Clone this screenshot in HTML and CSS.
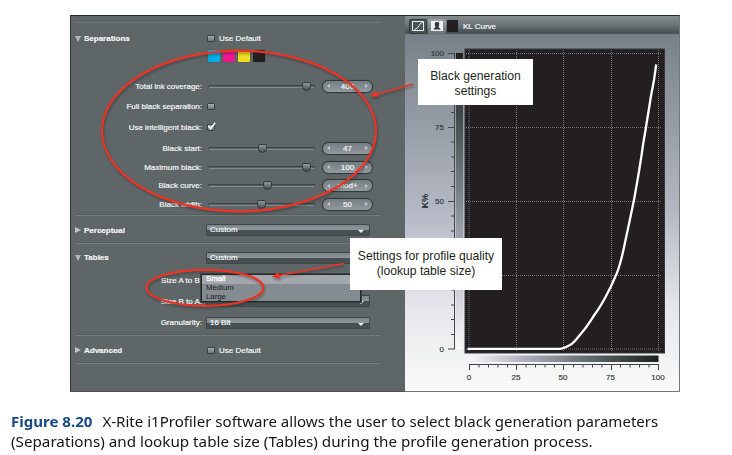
FILE: index.html
```html
<!DOCTYPE html>
<html lang="en">
<head>
<meta charset="utf-8">
<title>Figure 8.20</title>
<link rel="stylesheet" href="styles.css">
</head>
<body>
<figure class="figure">
  <div class="app">
    <div class="settings">
      <div class="strip"></div>
      <section class="group separations">
        <div class="row head"><h2><i class="tri down"></i>Separations</h2><div class="control"><i class="check"></i>Use Default</div></div>
        <div class="swatches"><i class="cyan"></i><i class="magenta"></i><i class="yellow"></i><i class="black"></i></div>
        <div class="row r20"><label>Total ink coverage:</label><div class="control"><div class="slider"><i class="knob" style="left:93%"></i></div><div class="stepper"><i class="prev"></i>400<i class="next"></i></div></div></div>
        <div class="row r21"><label>Full black separation:</label><div class="control"><i class="check"></i></div></div>
        <div class="row r21"><label>Use intelligent black:</label><div class="control"><i class="check"><svg viewBox="0 0 10 10"><path d="M1.5 4.5 4 7.5 9 .8"/></svg></i></div></div>
        <div class="row r20"><label>Black start:</label><div class="control"><div class="slider"><i class="knob" style="left:51%"></i></div><div class="stepper"><i class="prev"></i>47<i class="next"></i></div></div></div>
        <div class="row r18"><label>Maximum black:</label><div class="control"><div class="slider"><i class="knob" style="left:93%"></i></div><div class="stepper"><i class="prev"></i>100<i class="next"></i></div></div></div>
        <div class="row r18"><label>Black curve:</label><div class="control"><div class="slider"><i class="knob" style="left:56%"></i></div><div class="stepper"><i class="prev"></i>mod+<i class="next"></i></div></div></div>
        <div class="row r18"><label>Black width:</label><div class="control"><div class="slider"><i class="knob" style="left:50%"></i></div><div class="stepper"><i class="prev"></i>50<i class="next"></i></div></div></div>
      </section>
      <section class="group single">
        <div class="row"><h2><i class="tri"></i>Perceptual</h2><div class="control"><div class="select">Custom</div></div></div>
      </section>
      <section class="group tables">
        <div class="row r28"><h2><i class="tri down"></i>Tables</h2><div class="control"><div class="select">Custom</div></div></div>
        <div class="row r18"><label>Size A to B:</label><div class="control anchor"><div class="select"></div>
          <ul class="menu"><li class="active">Small</li><li>Medium</li><li>Large</li></ul></div></div>
        <div class="row r22"><label>Size B to A:</label><div class="control"><div class="select">Medium</div></div></div>
        <div class="row r20"><label>Granularity:</label><div class="control"><div class="select">16 Bit</div></div></div>
      </section>
      <section class="group single">
        <div class="row"><h2><i class="tri"></i>Advanced</h2><div class="control"><i class="check"></i>Use Default</div></div>
      </section>
    </div>
    <div class="viewer">
      <header class="toolbar">
        <span class="tool pressed"><svg viewBox="0 0 14 12"><path d="M1.5 1.5h11v9h-11zM3.5 9.500C8 9 8 3 12 2"/></svg></span>
        <span class="tool"><svg viewBox="0 0 14 12"><path class="card" d="M1 1h12v10H1z"/><path class="person" d="M3.500 9.500c0-1.500 2-1.500 2-2.500C4 3 5 2 7 2s3 1 1.500 5c0 1 2 1 2 2.500z"/></svg></span>
        <i class="chip"></i><span>KL Curve</span>
      </header>
      <svg class="chart" viewBox="405 35 275 356">
        <defs>
          <linearGradient id="gv" x1="0" y1="0" x2="0" y2="1"><stop offset="0" stop-color="#231f20"/><stop offset=".25" stop-color="#465253"/><stop offset=".5" stop-color="#7f8890"/><stop offset=".75" stop-color="#c0c3ce"/><stop offset="1" stop-color="#fafafb"/></linearGradient>
          <linearGradient id="gh"><stop offset="0" stop-color="#f7f6fa"/><stop offset=".25" stop-color="#b7b9c5"/><stop offset=".5" stop-color="#7e878c"/><stop offset=".75" stop-color="#485453"/><stop offset="1" stop-color="#1c201f"/></linearGradient>
        </defs>
        <rect x="456" y="53" width="7" height="296" fill="url(#gv)"/>
        <rect x="469" y="355.500" width="189.500" height="6.500" fill="url(#gh)"/>
        <rect class="plot" x="465" y="49" width="199.500" height="304"/>
        <path class="grid" d="M469 50v302M516.500 50v302M563.500 50v302M611.500 50v302M658.500 50v302M466 53.500h196M466 127.500h196M466 201.500h196M466 275.500h196M466 349h196"/>
        <path class="axis" d="M454.500 53v296M448 53.500h7M448 127.500h7M448 201.500h7M448 275.500h7M448 349h7M451 68h4M451 83h4M451 97.500h4M451 112.500h4M451 142h4M451 157h4M451 171.500h4M451 186.500h4M451 216h4M451 231h4M451 245.500h4M451 260.500h4M451 290h4M451 305h4M451 319.500h4M451 334.500h4"/>
        <path class="axis" d="M469 364.500h190M469.500 364v6M516.500 364v6M563.500 364v6M611.500 364v6M658.500 364v6M479 364v3.500M488.500 364v3.500M498 364v3.500M507.500 364v3.500M526 364v3.500M535.500 364v3.500M545 364v3.500M554.500 364v3.500M573.500 364v3.500M583 364v3.500M592.500 364v3.500M602 364v3.500M620.500 364v3.500M630 364v3.500M639.500 364v3.500M649 364v3.500"/>
        <path class="curve" d="M467.500 348.800H560C564 348.500 567 346.800 571.700 344C575 341.500 578 337 581.700 332.800C587 327 591 320 595 314C602 305 607 294 610.700 287L616.500 274C622 261 624 246 627.500 231L634 200C638 178 641 160 643 145L646 127L651 96L654 80L656.200 64.500"/>
        <g class="nums end"><text x="444" y="56">100</text><text x="444" y="130.300">75</text><text x="444" y="204.300">50</text><text x="444" y="352">0</text></g>
        <g class="nums mid"><text x="469" y="380">0</text><text x="516" y="380">25</text><text x="563" y="380">50</text><text x="610.500" y="380">75</text><text x="658" y="380">100</text></g>
        <text class="ktitle" transform="translate(427.500 201) rotate(-90)">K%</text>
      </svg>
    </div>
    <svg class="marks" viewBox="70 15 610 376">
      <ellipse cx="239" cy="131" rx="137" ry="80.300"/>
      <ellipse cx="205" cy="287.800" rx="58.300" ry="18"/>
      <path d="M413 84 376 94.500M344 263.500 279 275.500"/>
      <path class="tip" d="M370 96l6.500-5.200 1.700 6.300zM271.500 276.800l7.300-4.600 1.300 6.500z"/>
    </svg>
    <div class="note note-black">Black generation<br>settings</div>
    <div class="note note-size">Settings for profile quality<br>(lookup table size)</div>
  </div>
  <figcaption><span class="l1"><b>Figure 8.20</b>X-Rite i1Profiler software allows the user to select black generation parameters</span><span class="l2">(Separations) and lookup table size (Tables) during the profile generation process.</span></figcaption>
</figure>
</body>
</html>
```
FILE: styles.css
```css
* { box-sizing: border-box; }
body { margin: 0; background: #fff; font-family: "Liberation Sans", sans-serif; overflow: hidden; }
.figure { margin: 0; padding-top: 15px; }
.app { position: relative; display: grid; grid-template-columns: 335px 275px; width: 610px; height: 376px; margin-left: 70px; background: #5e6668; }
.settings { padding-right: 25px; border-left: 1px solid #303638; border-top: 1px solid #252b2c; border-bottom: 1px solid #564e57; color: #f4f5f5; font-size: 8px; -webkit-text-stroke: .2px #f4f5f5; }
.strip { height: 7px; margin-left: 4px; border-bottom: 1px solid #6e7779; }
.group { margin-left: 4px; border-bottom: 1px solid #737b7d; box-shadow: 0 -1px 0 #555d5f inset; }
.separations { height: 193px; }
.single { height: 28px; }
.tables { height: 92px; }
.row { display: grid; grid-template-columns: 127px 1fr; column-gap: 4px; align-items: center; height: 28px; }
.head { padding-top: 4px; height: 27px; }
.r20 { height: 20px; }
.r21 { height: 21px; }
.r18 { height: 18.500px; }
.r22 { height: 23px; }
.r28 { height: 27px; }
.row label { text-align: right; white-space: nowrap; }
h2 { display: flex; align-items: center; gap: 3px; margin: 0; font-size: 8px; font-weight: bold; }
.tri { width: 0; height: 0; border: 3px solid transparent; border-left: 6px solid #c3c7ca; border-right: 0; }
.tri.down { border: 3.500px solid transparent; border-top: 6px solid #b2b8bb; border-bottom: 0; }
.control { display: flex; align-items: center; }
.check { display: flex; width: 8px; height: 7px; margin: 0 4px 0 1px; border: 1px solid #394042; border-radius: 1px; background: linear-gradient(#aab0b4, #6c7477); }
.check svg { width: 9px; height: 9px; margin: -3px 0 0 -1px; flex: none; overflow: visible; fill: none; stroke: #fff; stroke-width: 1.600; }
.swatches { display: flex; gap: 3px; height: 26px; padding-left: 133px; }
.swatches i { width: 12px; height: 12px; border-radius: 1px; box-shadow: 0 0 1px #313739; }
.cyan { background: #00ade8; }
.magenta { background: #ed1691; }
.yellow { background: #f0dc22; }
.black { background: #231f20; }
.slider { position: relative; width: 107px; height: 3px; margin: 0 7px 0 2px; border: 1px solid #3d4446; border-bottom-color: #81898c; border-radius: 2px; background: #596164; }
.knob { position: absolute; top: -4px; width: 9px; height: 9px; margin-left: -5px; border: 1px solid #30373a; border-radius: 2px 2px 5px 5px; background: linear-gradient(#929a9d, #454d50); }
.stepper { display: flex; align-items: center; justify-content: space-between; width: 51px; height: 13px; padding: 0 4px; border: 1px solid #33393b; border-radius: 7px; background: linear-gradient(#747d80, #929aa0); box-shadow: 0 0 1px #2b3133; }
.prev, .next { width: 0; height: 0; border: 2px solid transparent; }
.prev { border-right: 3px solid #c3cbcf; border-left: 0; }
.next { border-left: 3px solid #c3cbcf; border-right: 0; }
.select { position: relative; width: 164px; height: 12px; padding-left: 3px; line-height: 10px; border: 1px solid #404749; border-radius: 1px; background: linear-gradient(#7d858a, #8d959a 46%, #465052 50%, #465052); }
.select::after { content: ""; position: absolute; right: 5px; top: 5px; border: 3px solid transparent; border-top-color: #e9ecec; border-bottom: 0; }
.anchor { position: relative; }
.menu { position: absolute; z-index: 1; left: -5px; top: 0; width: 160px; height: 28px; margin: 0; padding: 0; list-style: none; border: 1px solid #24282a; outline: 1px solid #3e4446; background: #858c91; color: #191d1f; -webkit-text-stroke: 0; font-size: 7.800px; line-height: 8.700px; }
.menu li { padding-left: 4px; }
.menu .active { background: #a3a8ae; color: #fff; -webkit-text-stroke: .3px #fff; }
.viewer { display: flex; flex-direction: column; border-top: 1px solid #252b2c; border-right: 1px solid #73777a; border-bottom: 1px solid #73777a; background: linear-gradient(#778087 18px, #b4b8c4 52%, #e6e7eb 78%, #fafafa); }
.toolbar { display: flex; align-items: center; gap: 1px; height: 19px; padding: 1px 0 0 4px; background: linear-gradient(#858d91, #6c7578 45%, #434d4f 90%, #838b8e); color: #f4f5f5; font-size: 8px; -webkit-text-stroke: .2px #f4f5f5; }
.tool { display: flex; align-items: center; justify-content: center; width: 18px; height: 15px; border-radius: 2px; background: linear-gradient(#9ca3a6, #697275); }
.tool svg { width: 14px; height: 12px; flex: none; fill: none; stroke: #edf0f0; stroke-width: 1; }
.pressed { background: #4b5355; border: 1px solid #31393b; }
.tool .card { fill: #eef0f0; stroke: none; }
.tool .person { fill: #30393b; stroke: none; }
.chip { width: 11px; height: 12px; margin-right: 4px; border-radius: 1px; background: #231f20; }
.chart { display: block; width: 275px; height: 356px; flex: none; }
.plot { fill: #231f20; stroke: #353638; stroke-width: 1; }
.grid { fill: none; stroke: #74777a; stroke-width: 1; stroke-dasharray: 1 1; }
.axis { fill: none; stroke: #414648; stroke-width: 1; }
.curve { fill: none; stroke: #fff; stroke-width: 2.300; }
.nums { font-size: 8px; fill: #303638; stroke: #303638; stroke-width: .15; }
.end { text-anchor: end; }
.mid, .ktitle { text-anchor: middle; }
.ktitle { font-size: 9px; font-weight: bold; fill: #24292b; }
.marks { position: absolute; z-index: 2; inset: 0; width: 610px; height: 376px; fill: none; stroke: #f03222; stroke-width: 2.200; filter: drop-shadow(1px 2px 1px rgba(35, 35, 35, .4)); }
.marks path { stroke-width: 1.500; }
.marks .tip { fill: #f03222; stroke: none; }
.note { position: absolute; z-index: 3; background: #fff; color: #231f20; text-align: center; font-size: 12.150px; line-height: 15px; white-space: nowrap; }
.note-black { left: 348px; top: 44px; width: 115px; height: 46px; padding-top: 10px; }
.note-size { left: 280px; top: 223px; width: 152px; height: 52px; padding-top: 11px; }
figcaption { display: flex; flex-direction: column; align-items: flex-start; padding: 20px 0 0 11px; font-family: "Noto Sans", sans-serif; font-size: 15px; line-height: 20px; color: #171415; white-space: nowrap; }
figcaption span { transform-origin: left; }
.l1 { transform: scaleX(1.003); }
.l2 { transform: scaleX(1.014); }
figcaption b { margin-right: 10px; color: #184a83; }
```
